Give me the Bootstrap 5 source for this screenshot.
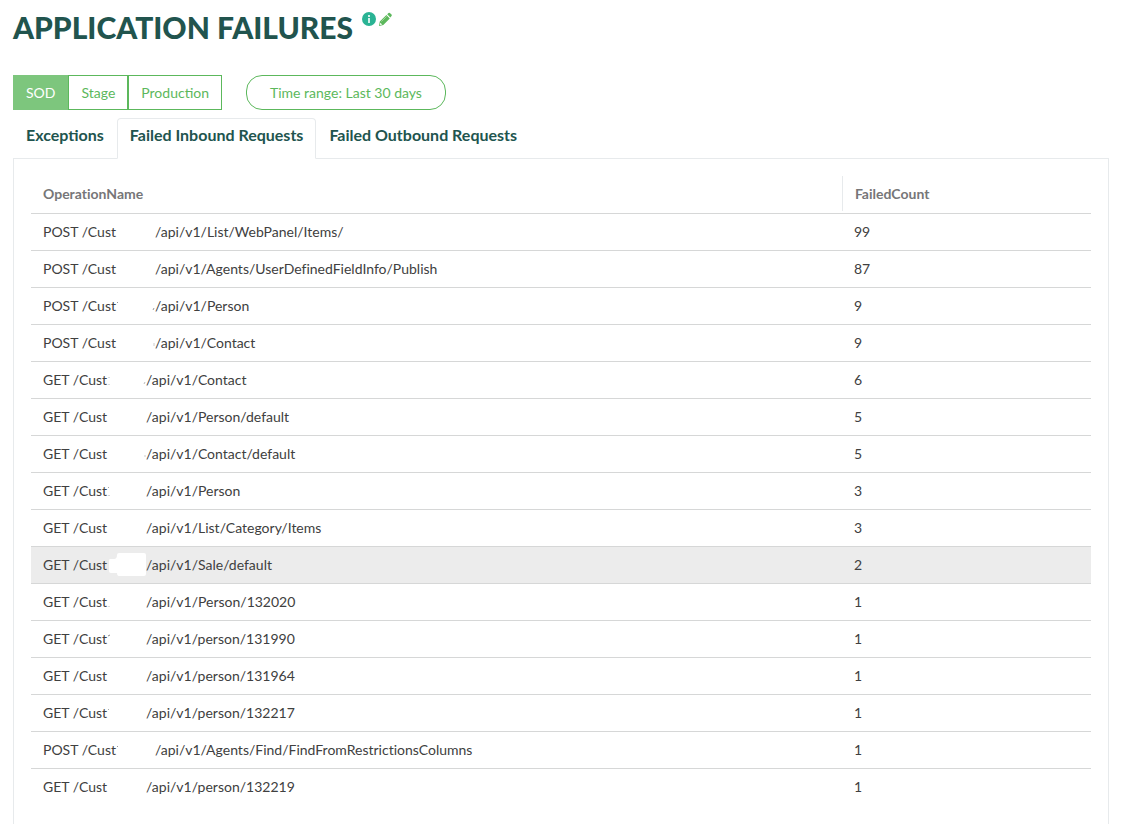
<!DOCTYPE html>
<html lang="en">
<head>
<meta charset="utf-8">
<meta name="viewport" content="width=device-width, initial-scale=1">
<title>Application Failures</title>
<link rel="stylesheet" href="https://cdn.jsdelivr.net/npm/bootstrap@5.3.0/dist/css/bootstrap.min.css">
<style>
  :root { --brand: #5cb85c; --ink: #21544e; --rule: #d6d7d7; --frame: #e7eaec; }
  body { font-family: Lato, "Open Sans", sans-serif; font-size: 14px; line-height: 20px; color: #404040; font-variant-ligatures: none; }
  .page { padding: 7px 25px 0 13px; }
  .page-title { font-size: 30px; line-height: 40px; font-weight: 900; color: var(--ink); }
  .title-tools { gap: 2px; padding: 5px 0 0 9px; }
  .title-tools a { display: block; line-height: 0; }
  .btn-env, .btn-range {
    --bs-btn-font-size: 14px; --bs-btn-line-height: 21px; --bs-btn-padding-y: 6px; --bs-btn-padding-x: 12px;
    --bs-btn-color: var(--brand); --bs-btn-border-color: var(--brand); --bs-btn-bg: #fff;
    --bs-btn-hover-color: #fff; --bs-btn-hover-bg: var(--brand); --bs-btn-hover-border-color: var(--brand);
    --bs-btn-active-color: #fff; --bs-btn-active-bg: #7dc67d; --bs-btn-active-border-color: #7dc67d;
    --bs-btn-border-radius: 0;
  }
  .btn-group > .btn-env.btn + .btn-env.btn { margin-left: 0; }
  .btn-range { --bs-btn-padding-x: 23px; --bs-btn-border-radius: 16px; }
  .toolbar { gap: 24px; margin-top: 28px; }
  .result-tabs {
    --bs-nav-tabs-border-color: var(--frame); --bs-nav-tabs-border-radius: 4px;
    --bs-nav-link-color: var(--ink); --bs-nav-link-hover-color: var(--ink);
    --bs-nav-tabs-link-active-color: var(--ink);
    --bs-nav-tabs-link-active-border-color: var(--frame) var(--frame) #fff;
    --bs-nav-tabs-link-hover-border-color: transparent;
    margin-top: 8px;
  }
  .result-tabs .nav-link { font-size: 16px; line-height: 17px; font-weight: 700; padding: 7px 12px 15px; }
  .result-panel { border: solid var(--frame); border-width: 0 1px; padding: 17px; }
  .failures { --bs-table-color: #404040; --bs-table-hover-bg: #ececec; table-layout: fixed; }
  .failures > :not(caption) > * > * { height: 37px; padding: 8px 12px; border-bottom: 1px solid var(--rule); white-space: nowrap; }
  .failures > thead > tr > th { color: #767678; font-weight: 700; vertical-align: middle; }
  .failures > tbody > tr:last-child > td { border-bottom: 0; }
  .failures > tbody > tr.picked > td { background: #ececec; }
  .failures > thead > tr > th.count-head { padding-left: 13px; background: linear-gradient(var(--frame), var(--frame)) 0 0 / 1px 35px no-repeat; }
  .col-name { width: 76.5%; }
  .blank { display: inline-block; width: 39px; height: 20px; vertical-align: top; }
  .blank svg { display: block; overflow: visible; }
</style>
</head>
<body>
<main class="page min-vh-100 d-flex flex-column">
  <header class="d-flex align-items-start">
    <h1 class="page-title mb-0">APPLICATION FAILURES</h1>
    <div class="title-tools d-flex">
      <a href="#" aria-label="Information"><svg width="14" height="14" viewBox="0 0 14 14"><circle cx="7" cy="7" r="7" fill="#2ab394"/><path d="M6 3h2v2H6zM6 6h2v5H6z" fill="#d4f0ea"/></svg></a>
      <a href="#" aria-label="Edit"><svg width="14" height="14" viewBox="0 0 14 14"><path d="M1 14l.8-4.500L8.400 3l3.400 3.400L5.300 13zM9.200 2.200l1.300-1.200q.7-.6 1.400 0l1.600 1.600q.7.700 0 1.400l-1.200 1.500z" fill="#5cb85c"/><path d="M3.400 9.500l5.300-5.200" stroke="#b5dfa8" stroke-width=".8"/><path d="M2.300 10.700l1.900 1.900-1.700.4-.6-.6z" fill="#fff"/></svg></a>
    </div>
  </header>

  <div class="toolbar d-flex flex-wrap">
    <div class="btn-group" role="group" aria-label="Environment">
      <button type="button" class="btn btn-env active" aria-pressed="true">SOD</button>
      <button type="button" class="btn btn-env">Stage</button>
      <button type="button" class="btn btn-env">Production</button>
    </div>
    <button type="button" class="btn btn-range">Time range: Last 30 days</button>
  </div>

  <ul class="nav nav-tabs result-tabs" role="tablist">
    <li class="nav-item" role="presentation"><button class="nav-link" type="button" role="tab">Exceptions</button></li>
    <li class="nav-item" role="presentation"><button class="nav-link active" type="button" role="tab" aria-selected="true">Failed Inbound Requests</button></li>
    <li class="nav-item" role="presentation"><button class="nav-link" type="button" role="tab">Failed Outbound Requests</button></li>
  </ul>

  <section class="result-panel flex-grow-1">
    <table class="table failures mb-0">
      <colgroup><col class="col-name"><col></colgroup>
      <thead><tr><th scope="col">OperationName</th><th scope="col" class="count-head">FailedCount</th></tr></thead>
      <tbody>
        <tr><td>POST /Cust<span class="blank"></span>/api/v1/List/WebPanel/Items/</td><td>99</td></tr>
        <tr><td>POST /Cust<span class="blank"></span>/api/v1/Agents/UserDefinedFieldInfo/Publish</td><td>87</td></tr>
        <tr><td>POST /Cust<span class="blank"><svg width="39" height="20"><path d="M1 7l1-1M37 14l1-2" stroke="#999"/></svg></span>/api/v1/Person</td><td>9</td></tr>
        <tr><td>POST /Cust<span class="blank"><svg width="39" height="20"><path d="M38 13v-3" stroke="#ccc"/></svg></span>/api/v1/Contact</td><td>9</td></tr>
        <tr><td>GET /Cust<span class="blank"><svg width="39" height="20"><path d="M2 7v1M2 14v1M37 14l1-2" stroke="#bbb"/></svg></span>/api/v1/Contact</td><td>6</td></tr>
        <tr><td>GET /Cust<span class="blank"></span>/api/v1/Person/default</td><td>5</td></tr>
        <tr><td>GET /Cust<span class="blank"><svg width="39" height="20"><path d="M38 13v-2" stroke="#ccc"/></svg></span>/api/v1/Contact/default</td><td>5</td></tr>
        <tr><td>GET /Cust<span class="blank"><svg width="39" height="20"><path d="M1 7l1-1M2 14v1" stroke="#aaa"/></svg></span>/api/v1/Person</td><td>3</td></tr>
        <tr><td>GET /Cust<span class="blank"></span>/api/v1/List/Category/Items</td><td>3</td></tr>
        <tr class="picked"><td>GET /Cust<span class="blank"><svg width="39" height="20"><path d="M3 4h4q3 0 3-4 0-2 2-2h25q2 0 2 2v19q0 2-2 2H12q-2 0-2-3H4q-2 0-2-2V6q0-2 1-2z" fill="#fff"/></svg></span>/api/v1/Sale/default</td><td>2</td></tr>
        <tr><td>GET /Cust<span class="blank"><svg width="39" height="20"><path d="M2 14v1" stroke="#bbb"/></svg></span>/api/v1/Person/132020</td><td>1</td></tr>
        <tr><td>GET /Cust<span class="blank"><svg width="39" height="20"><path d="M1 7l2-1" stroke="#888"/></svg></span>/api/v1/person/131990</td><td>1</td></tr>
        <tr><td>GET /Cust<span class="blank"></span>/api/v1/person/131964</td><td>1</td></tr>
        <tr><td>GET /Cust<span class="blank"><svg width="39" height="20"><path d="M1 7l1-1" stroke="#aaa"/></svg></span>/api/v1/person/132217</td><td>1</td></tr>
        <tr><td>POST /Cust<span class="blank"><svg width="39" height="20"><path d="M1 7l1-1" stroke="#999"/></svg></span>/api/v1/Agents/Find/FindFromRestrictionsColumns</td><td>1</td></tr>
        <tr><td>GET /Cust<span class="blank"></span>/api/v1/person/132219</td><td>1</td></tr>
      </tbody>
    </table>
  </section>
</main>
<script src="https://cdn.jsdelivr.net/npm/bootstrap@5.3.0/dist/js/bootstrap.bundle.min.js"></script>
</body>
</html>
